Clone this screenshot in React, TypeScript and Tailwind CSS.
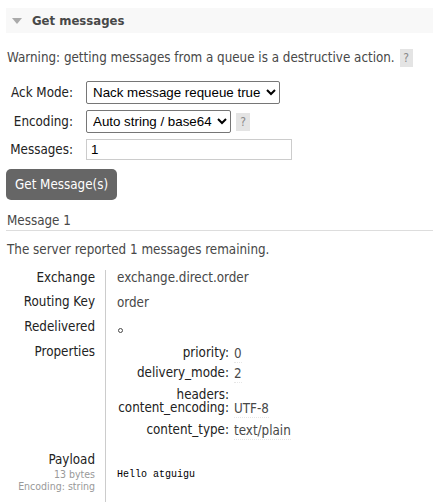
import React from "react";

const props = [
  { k: "priority:", v: "0", h: "h-[20px]" },
  { k: "delivery_mode:", v: "2", h: "h-[22px]" },
  { k: "headers:", v: "", h: "h-[13px]" },
  { k: "content_encoding:", v: "UTF-8", h: "h-[22px]" },
  { k: "content_type:", v: "text/plain", h: "h-[24px]" },
];

export default function App() {
  return (
    <div className="min-h-screen w-full bg-white pl-[6px] pt-[8px] text-[13.3px] leading-[16px] text-[#484848] [font-family:'DejaVu_Sans_Condensed','DejaVu_Sans',sans-serif]">
      {/* section header */}
      <div className="flex h-[25px] items-center bg-[#f8f8f8]">
        <svg width="10" height="6" viewBox="0 0 10 6" className="ml-[6px]">
          <path d="M0 0 L10 0 L5 6 Z" fill="#aaa" />
        </svg>
        <span className="ml-[10px] text-[13px] font-bold text-[#484848]">Get messages</span>
      </div>

      <div className="mt-[16px] flex h-[18px] items-center pl-[1px]">
        <span>Warning: getting messages from a queue is a destructive action.</span>
        <span className="ml-[5px] flex h-[18px] w-[13px] items-center justify-center bg-[#e4e4e4] text-[12px] text-[#888]">?</span>
      </div>

      {/* form */}
      <div className="mt-[14px] grid grid-cols-[67px_auto] items-center gap-x-[13px] gap-y-[6px] text-[#222]">
        <span className="text-right">Ack Mode:</span>
        <div className="flex">
          <select className="h-[23px] rounded-[2px] border border-[#767676] bg-white px-[2px] text-[13.33px] text-black [font-family:'Liberation_Sans',Arial,sans-serif]">
            <option>Nack message requeue true</option>
          </select>
        </div>
        <span className="text-right">Encoding:</span>
        <div className="flex items-center">
          <select className="h-[23px] rounded-[2px] border border-[#767676] bg-white px-[2px] text-[13.33px] text-black [font-family:'Liberation_Sans',Arial,sans-serif]">
            <option>Auto string / base64</option>
          </select>
          <span className="ml-[5px] flex h-[18px] w-[14px] items-center justify-center bg-[#e4e4e4] text-[12px] text-[#888]">?</span>
        </div>
        <span className="text-right">Messages:</span>
        <div className="flex">
          <input
            defaultValue="1"
            className="h-[21px] w-[206px] border border-[#ccc] px-[4px] text-[13.33px] text-black outline-none [font-family:'Liberation_Sans',Arial,sans-serif]"
          />
        </div>
      </div>

      <button className="mt-[9px] h-[31px] rounded-[5px] bg-[#666] px-[9px] text-white">
        Get Message(s)
      </button>

      <div className="mt-[13px] border-b border-[#ddd] pb-[1px] pl-[1px]">Message 1</div>

      <div className="mt-[11px] pl-[1px]">The server reported 1 messages remaining.</div>

      {/* message table */}
      <div className="mt-[12px] grid grid-cols-[99px_auto]">
        <div className="h-[24px] pr-[10px] text-right text-[#222]">Exchange</div>
        <div className="h-[24px] border-l border-[#ccc] pl-[11px]">exchange.direct.order</div>

        <div className="h-[25px] pr-[10px] text-right text-[#222]">Routing Key</div>
        <div className="h-[25px] border-l border-[#ccc] pl-[11px] pt-[1px]">order</div>

        <div className="h-[25px] pr-[10px] text-right text-[#222]">Redelivered</div>
        <div className="h-[25px] border-l border-[#ccc] pl-[12px] pt-[9px]">
          <div className="h-[5px] w-[5px] rounded-full border border-[#484848]" />
        </div>

        <div className="pr-[10px] text-right text-[#222]">Properties</div>
        <div className="h-[103px] border-l border-[#ccc] pl-[2px] pt-[1px]">
          <div className="grid w-fit grid-cols-[121px_auto] gap-x-[5px]">
            {props.map((p) => (
              <React.Fragment key={p.k}>
                <div className={p.h + " text-right text-[#222]" + (p.k === "headers:" ? " leading-[13px] pt-[1px]" : "")}>{p.k}</div>
                <div className={p.h + " pt-[1px]"}>
                  {p.v && <span className="border-b border-dotted border-[#e6e6e6] pb-[1px]">{p.v}</span>}
                </div>
              </React.Fragment>
            ))}
          </div>
        </div>

        <div className="flex flex-col items-end pb-[10px] pr-[10px] pt-[5px]">
          <span className="text-[#222]">Payload</span>
          <span className="text-[10.5px] leading-[12px] text-[#999]">13 bytes</span>
          <span className="text-[10.5px] leading-[12px] text-[#999]">Encoding: string</span>
        </div>
        <div className="flex items-center border-l border-[#ccc] pl-[11px] pt-[1px]">
          <pre className="text-[10px] leading-[12px] text-black [font-family:'Liberation_Mono',monospace]">Hello atguigu</pre>
        </div>
      </div>
    </div>
  );
}
